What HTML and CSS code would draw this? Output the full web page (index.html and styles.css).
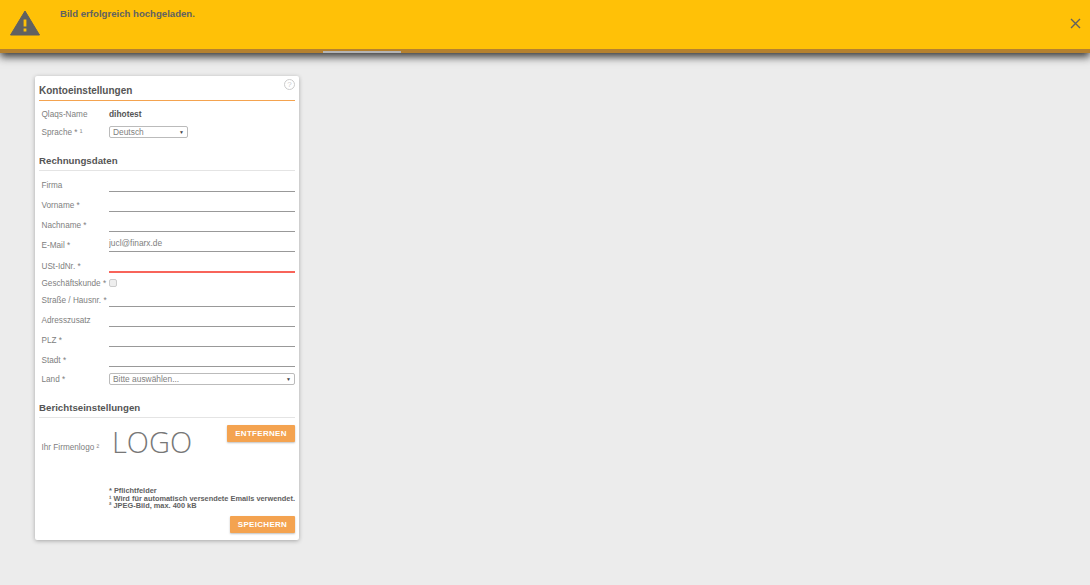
FILE: index.html
```html
<!DOCTYPE html>
<html lang="de">

<head>
  <meta charset="UTF-8">
  <title>Kontoeinstellungen</title>
  <link rel="stylesheet" href="styles.css">
</head>

<body>
  <div class="banner">
    <svg class="banner-icon" width="30" height="26" viewBox="0 0 30 26">
      <path d="M15 1 L29.5 25 H0.5 Z" fill="#616161" stroke="#616161" stroke-linejoin="round"/>
      <rect x="13.6" y="9.5" width="2.8" height="7" fill="#ffc107"/>
      <rect x="13.6" y="18.5" width="2.8" height="3" fill="#ffc107"/>
    </svg>
    <p class="banner-text">Bild erfolgreich hochgeladen.</p>
    <svg class="banner-close" width="11" height="11" viewBox="0 0 11 11">
      <path d="M1 1 L10 10 M10 1 L1 10" stroke="#616161" stroke-width="1.4" fill="none"/>
    </svg>
  </div>

  <nav class="tabs">
    <div class="tab"></div>
  </nav>

  <main>
    <form class="card">
      <span class="help">?</span>
      <h2 class="title first">Kontoeinstellungen</h2>
      <div class="row name-row">
        <label>Qlaqs-Name</label>
        <b class="value">dihotest</b>
      </div>
      <div class="row lang-row">
        <label>Sprache * ¹</label>
        <div class="select lang">
          <select>
            <option>Deutsch</option>
          </select>
        </div>
      </div>

      <h2 class="title billing">Rechnungsdaten</h2>
      <div class="row field first-field"><label>Firma</label><input type="text"></div>
      <div class="row field"><label>Vorname *</label><input type="text"></div>
      <div class="row field"><label>Nachname *</label><input type="text"></div>
      <div class="row field"><label>E-Mail *</label><input type="text" value="jucl@finarx.de"></div>
      <div class="row field ust"><label>USt-IdNr. *</label><input class="invalid" type="text"></div>
      <div class="row check-row"><label>Geschäftskunde *</label><input type="checkbox"></div>
      <div class="row field street"><label>Straße / Hausnr. *</label><input type="text"></div>
      <div class="row field"><label>Adresszusatz</label><input type="text"></div>
      <div class="row field"><label>PLZ *</label><input type="text"></div>
      <div class="row field"><label>Stadt *</label><input type="text"></div>
      <div class="row land-row">
        <label>Land *</label>
        <div class="select land">
          <select>
            <option>Bitte auswählen...</option>
          </select>
        </div>
      </div>

      <h2 class="title report">Berichtseinstellungen</h2>
      <div class="row logo-row">
        <label>Ihr Firmenlogo ²</label>
        <div class="logo">LOGO</div>
        <button class="btn" type="button">Entfernen</button>
      </div>

      <div class="notes">
        <p>* Pflichtfelder</p>
        <p>¹ Wird für automatisch versendete Emails verwendet.</p>
        <p>² JPEG-Bild, max. 400 kB</p>
      </div>
      <div class="actions">
        <button class="btn save" type="button">Speichern</button>
      </div>
    </form>
  </main>
</body>

</html>
```

FILE: styles.css
```css
* {
  box-sizing: border-box;
  margin: 0;
}

body {
  height: 585px;
  overflow: hidden;
  background-color: #ececec;
  font-family: "Liberation Sans", Arial, sans-serif;
  font-size: 8.2px;
  color: #808080;
}

.banner {
  position: absolute;
  top: 0;
  left: 0;
  width: 100%;
  height: 49px;
  background-color: #ffc107;
  box-shadow: 0 4px 0 #b5812f, 0 8px 8px rgba(40, 40, 40, 0.9);
}

.banner-icon {
  position: absolute;
  left: 10px;
  top: 10px;
}

.banner-text {
  position: absolute;
  left: 60px;
  top: 8px;
  font-size: 9.6px;
  font-weight: bold;
  color: #616161;
}

.banner-close {
  position: absolute;
  right: 9px;
  top: 18px;
}

.tabs {
  position: relative;
  height: 53px;
  padding-left: 323px;
}

.tab {
  width: 78px;
  height: 53px;
  border-bottom: 2px solid #b4b4b4;
}

main {
  padding: 23px 0 0 35px;
}

.card {
  position: relative;
  width: 264px;
  height: 464px;
  padding: 0 4px;
  background-color: #fff;
  border-radius: 2px;
  box-shadow: 0 1px 4px rgba(0, 0, 0, 0.3);
}

.help {
  position: absolute;
  top: 3px;
  right: 4px;
  width: 11px;
  height: 11px;
  border: 1px solid #ccc;
  border-radius: 50%;
  font-size: 8px;
  line-height: 9px;
  text-align: center;
  color: #ccc;
}

.title {
  font-size: 9.7px;
  line-height: 13px;
  font-weight: bold;
  color: #555;
  padding-bottom: 3px;
  border-bottom: 1px solid #e4e4e4;
}

.title.first {
  font-size: 10px;
  padding-top: 8px;
  border-bottom-color: #f4a34f;
}

.title.billing {
  margin-top: 15px;
}

.title.report {
  margin-top: 16px;
}

.row {
  display: flex;
  align-items: center;
}

.row label {
  width: 70px;
  padding-left: 2.5px;
  flex-shrink: 0;
  white-space: nowrap;
}

.value {
  font-size: 8.4px;
  color: #555;
}

.name-row {
  margin-top: 6px;
  height: 14px;
}

.lang-row {
  margin-top: 4px;
  height: 14px;
}

.select {
  position: relative;
  height: 12px;
}

.select::after {
  content: "▼";
  position: absolute;
  top: 3px;
  right: 4px;
  font-size: 5px;
  line-height: 6px;
  color: #444;
}

.select select {
  display: block;
  width: 100%;
  height: 100%;
  padding: 0 3px;
  border: 1px solid #bbb;
  border-radius: 2px;
  background-color: #fff;
  appearance: none;
  font-family: inherit;
  font-size: 8.4px;
  color: #808080;
}

.lang {
  width: 79px;
}

.land {
  flex: 1;
  min-width: 0;
}

.field {
  height: 20px;
  align-items: flex-end;
}

.field label {
  padding-bottom: 2px;
}

.first-field {
  margin-top: 1px;
}

.field input {
  flex: 1;
  min-width: 0;
  height: 20px;
  padding: 2px 0 0;
  border: 0;
  border-bottom: 1px solid #999;
  outline: 0;
  font-family: inherit;
  font-size: 8.4px;
  color: #808080;
}

.field.ust {
  height: 21px;
}

.field input.invalid {
  height: 21px;
  border-bottom: 2px solid #f8645a;
}

.check-row {
  height: 14px;
  margin-top: 3px;
}

.check-row input {
  width: 8px;
  height: 8px;
  margin: 0;
  appearance: none;
  border: 1px solid #ccc;
  border-radius: 2px;
  background-color: #eee;
}

.street {
  margin-top: -3px;
}

.land-row {
  height: 12px;
  margin-top: 6px;
}

.logo-row {
  height: 60px;
  align-items: flex-start;
  margin-top: 7px;
}

.logo-row label {
  margin-top: 18px;
}

.logo {
  font-family: "Open Sans", sans-serif;
  font-size: 29px;
  line-height: 34px;
  font-weight: 300;
  color: #777;
  margin-left: 3px;
}

.btn {
  padding: 0;
  height: 17px;
  border: 0;
  border-radius: 1px;
  background-color: #f4a350;
  box-shadow: 0 1px 2px rgba(0, 0, 0, 0.25);
  font-family: inherit;
  font-size: 8px;
  font-weight: bold;
  letter-spacing: 0.3px;
  text-transform: uppercase;
  color: #fff;
}

.logo-row .btn {
  width: 68px;
  margin-left: auto;
}

.notes {
  margin-top: 2px;
  padding-left: 70px;
  font-size: 7.4px;
  line-height: 7.5px;
  font-weight: bold;
  color: #616161;
  white-space: nowrap;
}

.actions {
  display: flex;
  justify-content: flex-end;
  margin-top: 6px;
}

.save {
  width: 65px;
}
```
